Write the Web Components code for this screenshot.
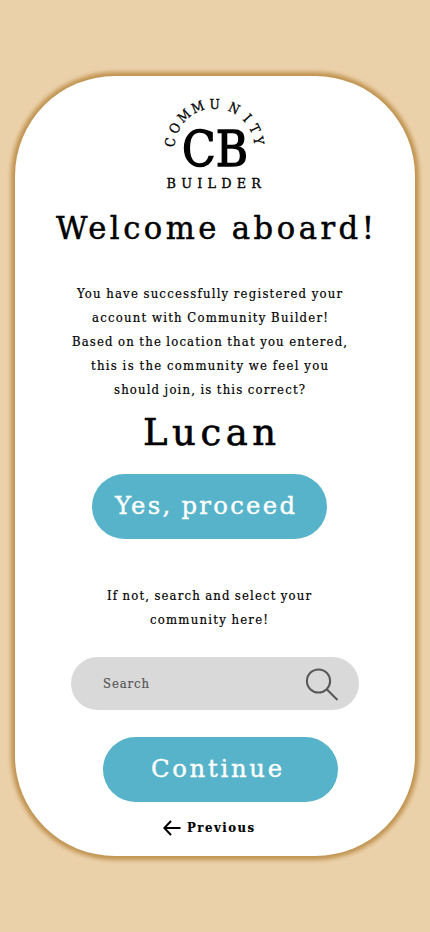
<!DOCTYPE html>
<html lang="en">
<head>
<meta charset="utf-8">
<title>Community Builder</title>
<style>
html,body{margin:0;height:100%}
body{background:#ebd1aa;font-family:"DejaVu Serif Condensed","DejaVu Serif",serif;font-stretch:condensed;color:#000}
</style>
</head>
<body>
<welcome-page></welcome-page>
<script>
const define = (name, html, init) => {
  const t = document.createElement('template');
  t.innerHTML = html;
  customElements.define(name, class extends HTMLElement {
    connectedCallback() {
      if (this.shadowRoot) return;
      this.attachShadow({mode: 'open'}).append(t.content.cloneNode(true));
      if (init) init(this, this.shadowRoot);
    }
  });
};

// One line of text, slightly widened and tracked out to the given measure.
define('tracked-line', `<style>
:host{display:block;white-space:pre}
span{display:inline-block;word-spacing:-.04em;-webkit-text-stroke:.015em currentColor}
</style><span><slot></slot></span>`, (el, root) => {
  const w = +el.getAttribute('measure'), s = root.querySelector('span'), stretch = 1.08;
  el.style.width = w + 'px';
  const n = el.textContent.length - 1;
  s.style.letterSpacing = (w / stretch - s.getBoundingClientRect().width) / n + 'px';
  s.style.transformOrigin = '0 50%';
  s.style.transform = `scaleX(${stretch})`;
});

define('brand-logo', `<style>
:host{display:block;width:110px;height:100px}
svg{display:block}
text{font-family:"DejaVu Serif Condensed","DejaVu Serif",serif;font-stretch:condensed;stroke:#000;stroke-width:.3}
</style>
<svg width="110" height="100" viewBox="160 93 110 100">
<text class="arc" font-size="13.5">COMMUNITY</text>
<text x="182" y="166" font-size="48" textLength="66" lengthAdjust="spacingAndGlyphs" style="stroke-width:1.3">CB</text>
<text transform="translate(166.5 188) scale(1.08 1)" font-size="13.2" textLength="87.5">BUILDER</text>
</svg>`, (el, root) => {
  const angles = [-82,-63,-43,-22,0,26,47,64,80];
  const widths = [.69,.74,.92,.92,.76,.79,.355,.6,.595];
  const size = 13.5, r = 40, xs = [], ys = [];
  angles.forEach((a, i) => {
    const t = a * Math.PI / 180, h = widths[i] * size / 2;
    xs.push((214.6 + r * Math.sin(t) - h * Math.cos(t)).toFixed(2));
    ys.push((148.5 - r * Math.cos(t) - h * Math.sin(t)).toFixed(2));
  });
  const arc = root.querySelector('.arc');
  arc.setAttribute('x', xs.join(' '));
  arc.setAttribute('y', ys.join(' '));
  arc.setAttribute('rotate', angles.join(' '));
});

define('pill-button', `<style>
:host{display:block;width:235px;height:65px}
button{all:unset;box-sizing:border-box;display:flex;justify-content:flex-start;width:100%;height:100%;padding-left:var(--inset);border-radius:33px;background:#56b3c9;color:#fff;font-size:25px;line-height:63px;cursor:pointer}
</style><button><slot></slot></button>`);

define('search-field', `<style>
:host{box-sizing:border-box;display:flex;align-items:center;justify-content:space-between;width:288px;height:53px;padding:0 20px 0 32px;border-radius:27px;background:#d9d9d9;color:#555;font-size:12px;line-height:54px}
svg{display:block;margin-top:3px}
</style><slot></slot>
<svg width="34" height="34" viewBox="0 0 34 34" fill="none" stroke="#575757" stroke-width="2"><circle cx="13.5" cy="13" r="11.6"/><path d="M21.7 21.2 32.5 32"/></svg>`);

define('back-link', `<style>
:host{display:flex;align-items:center;gap:6px;height:24px;line-height:24px;font-size:12px;font-weight:bold}
svg{display:block}
</style><svg width="18" height="16" viewBox="0 0 18 16" fill="none" stroke="#000" stroke-width="2"><path d="M17.5 8H1.5M8 1 1.3 8 8 15"/></svg><slot></slot>`);

define('page-card', `<style>
:host{box-sizing:border-box;display:flex;flex-direction:column;align-items:center;width:400px;height:780px;padding-top:17px;border-radius:100px;background:#fff;box-shadow:0 0 4px 4px #c09350}
</style><slot></slot>`);

define('welcome-page', `<style>
:host{box-sizing:border-box;display:flex;justify-content:center;height:932px;padding-top:76px}
h1,h2,p{margin:0;font-weight:normal}
h1{margin-top:15px;font-size:31.5px;line-height:40px}
h2{margin:6px 12px 0 0;font-size:38px;line-height:49px;height:50px}
p{display:flex;flex-direction:column;align-items:center;margin-right:11px;font-size:12px;line-height:24px}
.intro{margin-top:34px}
.yes{--inset:23px;margin:16px 11px 0 0}
.alt{margin-top:45px;margin-right:12px}
search-field{margin-top:25px}
.continue{--inset:48px;margin:27px 0 0 11px}
back-link{margin:14px 14px 0 0}
</style>
<page-card>
<brand-logo></brand-logo>
<h1><tracked-line measure="318">Welcome aboard!</tracked-line></h1>
<p class="intro">
<tracked-line measure="265">You have successfully registered your</tracked-line>
<tracked-line measure="236">account with Community Builder!</tracked-line>
<tracked-line measure="275">Based on the location that you entered,</tracked-line>
<tracked-line measure="237">this is the community we feel you</tracked-line>
<tracked-line measure="191">should join, is this correct?</tracked-line>
</p>
<h2><tracked-line measure="133">Lucan</tracked-line></h2>
<pill-button class="yes"><tracked-line measure="180">Yes, proceed</tracked-line></pill-button>
<p class="alt">
<tracked-line measure="204">If not, search and select your</tracked-line>
<tracked-line measure="118">community here!</tracked-line>
</p>
<search-field><tracked-line measure="46">Search</tracked-line></search-field>
<pill-button class="continue"><tracked-line measure="131">Continue</tracked-line></pill-button>
<back-link><tracked-line measure="67">Previous</tracked-line></back-link>
</page-card>`);
</script>
</body>
</html>
